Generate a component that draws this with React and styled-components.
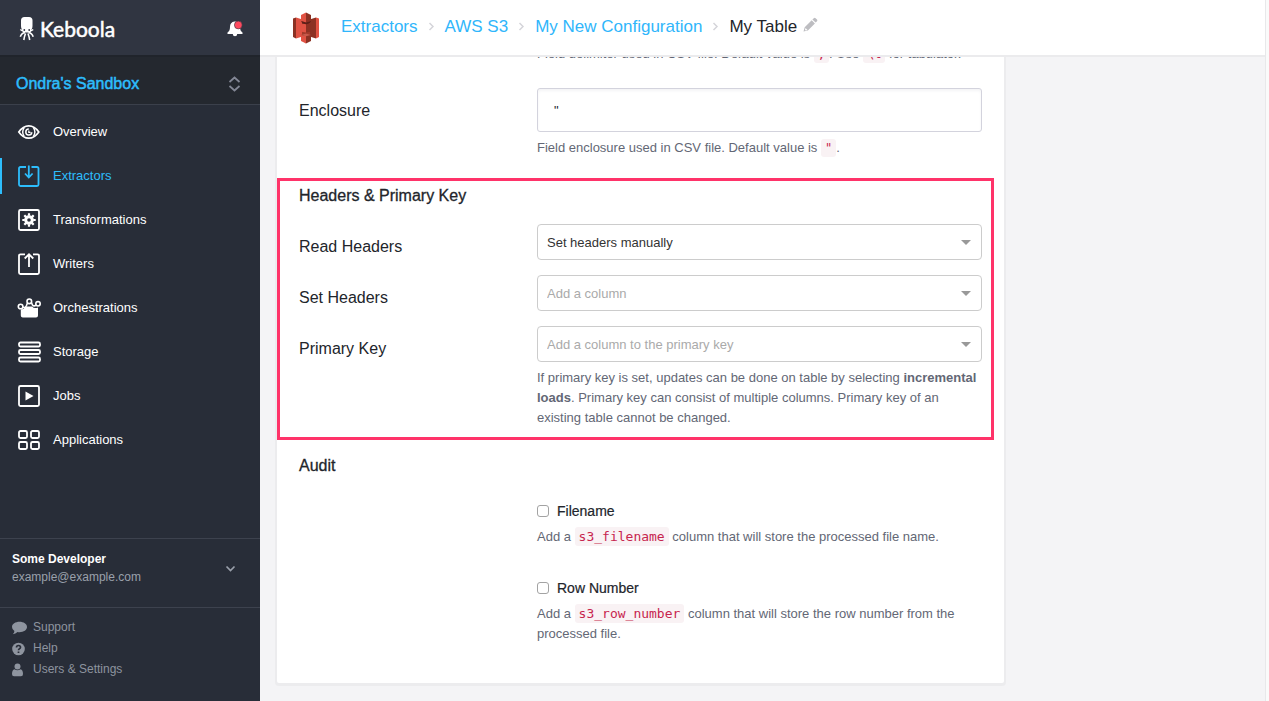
import React from "react";
import styled, { createGlobalStyle } from "styled-components";

const GlobalStyle = createGlobalStyle`
  * { box-sizing: border-box; }
  body {
    margin: 0;
    background: #fafafa;
    color: #22252b;
    font-family: "Liberation Sans", Arial, sans-serif;
    font-size: 13px;
    line-height: 20px;
  }
  a { text-decoration: none; }
  button { font: inherit; border: 0; background: none; padding: 0; cursor: pointer; }
`;

const Shell = styled.div`
  display: flex;
  min-height: 100vh;
  padding-right: 3px;
`;

/* ---------- sidebar ---------- */

const Sidebar = styled.aside`
  flex: none;
  width: 260px;
  display: flex;
  flex-direction: column;
  background: #282d38;
`;

const Brand = styled.div`
  display: flex;
  align-items: center;
  justify-content: space-between;
  height: 57px;
  padding: 2px 16px 0 18px;
  background: #303541;
  border-bottom: 2px solid #20242b;
`;

const Logo = styled.a`
  display: flex;
  align-items: center;
  gap: 5px;
  color: #fff;
  font-family: Lato, sans-serif;
  font-size: 21px;
  -webkit-text-stroke: 0.5px currentColor;
`;

const BellButton = styled.button`
  display: flex;
`;

const ProjectButton = styled.button`
  display: flex;
  align-items: center;
  justify-content: space-between;
  height: 48px;
  padding: 6px 19px 0 16px;
  background: #24282f;
  border-bottom: 1px solid #3b404b;
  color: #2dbdfc;
`;

const ProjectName = styled.span`
  font-size: 16px;
  -webkit-text-stroke: 0.5px currentColor;
`;

const Nav = styled.nav`
  display: flex;
  flex-direction: column;
  gap: 8px;
  padding-top: 9px;
`;

const NavItem = styled.a`
  display: flex;
  align-items: center;
  gap: 12px;
  height: 36px;
  padding-left: 15px;
  border-left: 2px solid ${(p) => (p.$active ? "#2dbdfc" : "transparent")};
  color: ${(p) => (p.$active ? "#2dbdfc" : "#fff")};
`;

const UserButton = styled.button`
  display: flex;
  align-items: center;
  justify-content: space-between;
  margin-top: auto;
  height: 69px;
  padding: 0 24px 10px 12px;
  border-top: 1px solid #3d424e;
  text-align: left;
  font-size: 12px;
  line-height: 18px;
  color: #9aa0ab;
`;

const UserName = styled.strong`
  display: block;
  color: #fff;
`;

const Links = styled.div`
  display: flex;
  flex-direction: column;
  height: 94px;
  padding: 9px 12px;
  border-top: 1px solid #3d424e;
  font-size: 12px;
`;

const FootLink = styled.a`
  display: flex;
  align-items: center;
  gap: 6px;
  line-height: 21px;
  color: #8e949f;
`;

/* ---------- main ---------- */

const Main = styled.main`
  flex: 1;
  min-width: 0;
  display: flex;
  flex-direction: column;
  background: #f4f4f6;
  border-right: 1px solid #e8e8ea;
`;

const Header = styled.header`
  display: flex;
  align-items: center;
  height: 57px;
  padding: 0 32px;
  background: #fff;
  border-bottom: 2px solid #ebebed;
`;

const Crumbs = styled.nav`
  display: flex;
  align-items: center;
  gap: 10px;
  margin: 0 6px 2px 21px;
  font-size: 17px;
  color: #22252b;
`;

const Crumb = styled.a`
  color: #30b6fb;
`;

const EditButton = styled(BellButton)`
  margin-bottom: 7px;
`;

const Content = styled.div`
  overflow: hidden;
  padding: 0 17px 17px;
`;

const Card = styled.form`
  max-width: 727px;
  margin-top: -16px;
  padding: 3px 0 39px;
  background: #fff;
  border-radius: 2px;
  box-shadow: 0 1px 0 2px #ececee;
`;

const Group = styled.section`
  margin-right: 10px;
  padding: 0 12px 0 22px;
`;

const Highlight = styled.section`
  margin: 20px 10px 0 0;
  padding: 5px 9px 9px 19px;
  border: 3px solid #ff3369;
`;

const SectionTitle = styled.h2`
  margin: 0;
  font-size: 16px;
  font-weight: 400;
  -webkit-text-stroke: 0.3px currentColor;
`;

const Field = styled.div`
  display: grid;
  grid-template-columns: 238px minmax(0, 1fr);
  margin-top: ${(p) => p.$gap || 0}px;
`;

const Label = styled.label`
  padding-top: 13px;
  font-size: 16px;
`;

const Control = styled.div`
  grid-column: 2;
`;

const TextInput = styled.input`
  display: block;
  width: 100%;
  height: 44px;
  padding: 0 16px;
  border: 1px solid #d3d3dd;
  border-radius: 3px;
  box-shadow: inset 0 2px 3px #f4f4f6;
  background: #fff;
  color: #22252b;
  font: inherit;
`;

const SelectWrap = styled.div`
  position: relative;
  svg {
    position: absolute;
    top: 16px;
    right: 11px;
    pointer-events: none;
  }
`;

const SelectBox = styled.select`
  appearance: none;
  display: block;
  width: 100%;
  height: 36px;
  padding: 1px 30px 0 9px;
  border: 1px solid #ccc;
  border-radius: 4px;
  background: #fff;
  color: ${(p) => (p.$empty ? "#aaa" : "#333")};
  font: inherit;
`;

const Help = styled.p`
  margin: ${(p) => (p.$flush ? 0 : 6)}px 0 0;
  color: #636775;
`;

const Code = styled.code`
  padding: 2px 4px;
  border-radius: 3px;
  background: #f9f2f4;
  color: #c7254e;
  font-family: "DejaVu Sans Mono", monospace;
  font-size: ${(p) => (p.$small ? 12 : 13)}px;
  line-height: 16px;
`;

const CheckLabel = styled.label`
  display: flex;
  align-items: center;
  gap: 7px;
  margin-bottom: 6px;
  font-size: 14px;
  -webkit-text-stroke: 0.2px currentColor;
`;

const CheckInput = styled.input`
  appearance: none;
  width: 12px;
  height: 12px;
  margin: 0 1px 0 0;
  border: 1px solid #a3a3a3;
  border-radius: 3px;
  background: #fff;
`;

/* ---------- icons ---------- */

const NavSvg = ({ children }) => (
  <svg width="24" height="24" viewBox="0 0 24 24" fill="none" stroke="currentColor" strokeWidth="2">
    {children}
  </svg>
);

const icons = {
  eye: (
    <NavSvg>
      <path d="M1.800 12Q6 5.800 11.800 5.800T21.800 12Q17.500 18.200 11.800 18.200T1.800 12Z" strokeWidth="1.700" />
      <path d="M7.200 7.500q-3 4.500 0 9M16.400 7.500q3 4.500 0 9" strokeWidth="1.400" />
      <path d="M11.800 9a3 3 0 1 0 3 3.200" strokeWidth="1.500" />
      <path d="M11.800 10.500v1.800h1.800" strokeWidth="1.200" />
    </NavSvg>
  ),
  extract: (
    <NavSvg>
      <path d="M9 3H3.500q-1.500 0-1.500 1.500v16q0 1.500 1.500 1.500h16.500q1.500 0 1.500-1.500v-16q0-1.500-1.500-1.500H14.500" strokeWidth="1.800" />
      <path d="M11.800 1.500v12M8 9.500l3.800 4 3.800-4" strokeWidth="1.800" />
    </NavSvg>
  ),
  gear: (
    <NavSvg>
      <rect x="2" y="2" width="20" height="20" rx="1.500" strokeWidth="1.800" />
      <circle cx="12" cy="12" r="3.300" strokeWidth="3" />
      <path d="M12 5.300v2.500M12 16.200v2.500M5.300 12h2.500M16.200 12h2.500M7.300 7.300l1.800 1.800M14.900 14.900l1.800 1.800M16.700 7.300l-1.800 1.800M9.100 14.900l-1.800 1.800" strokeWidth="2.200" />
    </NavSvg>
  ),
  write: (
    <NavSvg>
      <path d="M8 2.300H3.500Q2 2.300 2 3.800v16.700q0 1.500 1.500 1.500h17q1.500 0 1.500-1.500v-16.700q0-1.500-1.500-1.500H16" strokeWidth="1.800" />
      <path d="M12 15V3M7.700 6.500l4.300-4.200 4.300 4.200" strokeWidth="1.800" />
    </NavSvg>
  ),
  orchestra: (
    <NavSvg>
      <path d="M3.800 13.500q3.500-.5 5-3h6.500q1.500 2.500 5.700 1v8q0 2-2 2H5.800q-2 0-2-2Z" fill="currentColor" stroke="none" />
      <path d="M5.500 11q2.500 1.500 4-1.500l1.200-3.300M14.300 6.200l1.200 2.800q1.500 1.800 3.800 0" strokeWidth="1.600" />
      <circle cx="3.600" cy="10.500" r="2.300" fill="#282d38" strokeWidth="1.600" />
      <circle cx="12.300" cy="5.300" r="2.300" fill="#282d38" strokeWidth="1.600" />
      <circle cx="21" cy="7.800" r="2.200" fill="#282d38" strokeWidth="1.600" />
    </NavSvg>
  ),
  storage: (
    <NavSvg>
      <rect x="2" y="2.500" width="21" height="4" rx="1.500" strokeWidth="1.800" />
      <rect x="2" y="10" width="21" height="4" rx="1.500" strokeWidth="1.800" />
      <rect x="2" y="17.500" width="21" height="4" rx="1.500" strokeWidth="1.800" />
    </NavSvg>
  ),
  jobs: (
    <NavSvg>
      <rect x="2" y="2" width="20" height="20" rx="1.500" strokeWidth="1.800" />
      <path d="M8.500 7.500v9l8-4.500Z" fill="currentColor" stroke="none" />
    </NavSvg>
  ),
  apps: (
    <NavSvg>
      <rect x="2" y="3" width="8" height="7" rx="1.500" strokeWidth="1.800" />
      <rect x="14" y="3" width="8" height="7" rx="1.500" strokeWidth="1.800" />
      <rect x="2" y="14" width="8" height="7" rx="1.500" strokeWidth="1.800" />
      <rect x="14" y="14" width="8" height="7" rx="1.500" strokeWidth="1.800" />
    </NavSvg>
  ),
};

const Octopus = () => (
  <svg width="17" height="26" viewBox="0 0 17 26" fill="none" stroke="#fff">
    <path d="M3 4.500Q3 1 6.500 1h4.500Q14.500 1 14.500 4.500V10q0 2-1 3.500l-1 3h-7.500l-1-3Q3 12 3 10Z" fill="#fff" stroke="none" />
    <path d="M6.500 15Q4 15 2.300 13.500M11 15q2.500 0 4.200-1.500M7 16.500Q3.500 17 2.300 20.800M10.500 16.500q3.500.5 4.700 4.300M7.500 17.500Q6.500 20 5.800 24M10 17.500q1 2.500 1.700 6.500" strokeWidth="1.600" />
    <circle cx="6.300" cy="14" r="0.900" fill="#303541" stroke="none" />
    <circle cx="11.200" cy="14" r="0.900" fill="#303541" stroke="none" />
  </svg>
);

const Bell = () => (
  <svg width="17" height="18" viewBox="0 0 17 18">
    <path d="M7.500 1.500q-4.500.5-4.500 5.500 0 4-2.500 5.500v1.500h15v-1.500Q13 11 13 7q0-5-4.500-5.500ZM5.800 14a2.200 2.200 0 0 0 4.400 0Z" fill="#fff" />
    <circle cx="11.300" cy="5" r="3.900" fill="#ff4a5f" stroke="#303541" strokeWidth="0.600" />
  </svg>
);

const UpDown = () => (
  <svg width="13" height="16" viewBox="0 0 13 16" fill="none" stroke="#838795" strokeWidth="1.700">
    <path d="M1.500 6l5-4.500 5 4.500M1.500 10l5 4.500 5-4.500" />
  </svg>
);

const ChevronDown = () => (
  <svg width="11" height="7" viewBox="0 0 11 7" fill="none" stroke="#9aa0ab" strokeWidth="1.700">
    <path d="M1.500 1.500l4 4 4-4" />
  </svg>
);

const Separator = () => (
  <svg width="7" height="9" viewBox="0 0 7 9" fill="none" stroke="#d5d5da" strokeWidth="1.500">
    <path d="M1.500 1l3.500 3.500L1.500 8" />
  </svg>
);

const Caret = () => (
  <svg width="10" height="5" viewBox="0 0 10 5">
    <path d="M0 0h10L5 5Z" fill="#999" />
  </svg>
);

const Pencil = () => (
  <svg width="15" height="15" viewBox="0 0 15 15" fill="#bdbdc1">
    <path d="M10.800 1.200q.9-.9 1.800 0l1.400 1.400q.8.800 0 1.600L12.600 5.600 9.400 2.600ZM8.700 3.300l3.200 3.200-7 7L.5 14.500l1.200-4.200ZM2.500 11l-.5 2 .8.600 1.700-.5Z" fillRule="evenodd" />
  </svg>
);

const S3Logo = () => (
  <svg width="28" height="32" viewBox="0 0 28 32">
    <path d="M4 5.500l6.500 2v17L4 26.500Z" fill="#e05243" />
    <path d="M1 6.500l3-1v21l-3-1.500Z" fill="#8c3123" />
    <path d="M24 5.500l-6.500 2v17l6.500 2Z" fill="#8c3123" />
    <path d="M24 5.500l3 1v18.500l-3 1.500Z" fill="#e05243" />
    <path d="M10 9h8v14h-8Z" fill="#a33a2b" />
    <path d="M14 .5l5 2.500v6l-5 1.500Z" fill="#8c3123" />
    <path d="M14 .5L9 3v6l5 1.500Z" fill="#e05243" />
    <path d="M14 11.500l4.500.7v7.600l-4.500.7Z" fill="#8c3123" />
    <path d="M14 11.500l-4.500.7v7.600l4.500.7Z" fill="#e05243" />
    <path d="M9 23l5-1.500L19 23v6l-5 2.500Z" fill="#8c3123" />
    <path d="M14 24L9 23v6l5 2.500Z" fill="#e05243" />
    <path d="M9 9l5 1.500L19 9l-1.500 2.500-3.500.8-3.500-.8Z" fill="#5e1f18" />
    <path d="M9 23l5 1.200 5-1.200-5-1.500Z" fill="#c75a4c" />
  </svg>
);

const SpeechIcon = () => (
  <svg width="15" height="14" viewBox="0 0 15 14" fill="currentColor">
    <path d="M7.500.8C11.600.8 15 3 15 6s-3.400 5.200-7.500 5.200q-1 0-2-.2Q3.500 13 .8 13.300q1.500-1.400 1.600-3.200Q0 8.500 0 6C0 3 3.400.8 7.500.8Z" />
  </svg>
);

const HelpIcon = () => (
  <svg width="15" height="14" viewBox="0 0 15 14">
    <circle cx="6.500" cy="7" r="6.300" fill="currentColor" />
    <path d="M4.500 5.500q0-2 2-2t2 1.800q0 1-1 1.500t-1 1.500M6.500 9.400v1.600" fill="none" stroke="#282d38" strokeWidth="1.700" />
  </svg>
);

const PersonIcon = () => (
  <svg width="15" height="14" viewBox="0 0 15 14" fill="currentColor">
    <circle cx="5.500" cy="3.500" r="3" />
    <path d="M2.500 6.200q3 2 6 0Q11 7 11 11q0 2.300-2 2.300H2Q0 13.300 0 11 0 7 2.500 6.200Z" />
  </svg>
);

/* ---------- page ---------- */

const navItems = [
  ["Overview", "eye"],
  ["Extractors", "extract"],
  ["Transformations", "gear"],
  ["Writers", "write"],
  ["Orchestrations", "orchestra"],
  ["Storage", "storage"],
  ["Jobs", "jobs"],
  ["Applications", "apps"],
];

const SelectField = ({ id, label, value, empty, gap, children }) => (
  <Field $gap={gap}>
    <Label htmlFor={id}>{label}</Label>
    <Control>
      <SelectWrap>
        <SelectBox id={id} $empty={empty}>
          <option>{value}</option>
        </SelectBox>
        <Caret />
      </SelectWrap>
      {children}
    </Control>
  </Field>
);

const CheckField = ({ id, label, gap, children }) => (
  <Field $gap={gap}>
    <Control>
      <CheckLabel htmlFor={id}>
        <CheckInput id={id} type="checkbox" />
        {label}
      </CheckLabel>
      <Help $flush>{children}</Help>
    </Control>
  </Field>
);

export default function App() {
  return (
    <>
      <GlobalStyle />
      <Shell>
        <Sidebar>
          <Brand>
            <Logo href="#">
              <Octopus />
              Keboola
            </Logo>
            <BellButton type="button" aria-label="Notifications">
              <Bell />
            </BellButton>
          </Brand>
          <ProjectButton type="button">
            <ProjectName>Ondra's Sandbox</ProjectName>
            <UpDown />
          </ProjectButton>
          <Nav>
            {navItems.map(([name, icon]) => (
              <NavItem key={name} href="#" $active={name === "Extractors"}>
                {icons[icon]}
                {name}
              </NavItem>
            ))}
          </Nav>
          <UserButton type="button">
            <span>
              <UserName>Some Developer</UserName>
              example@example.com
            </span>
            <ChevronDown />
          </UserButton>
          <Links>
            <FootLink href="#"><SpeechIcon />Support</FootLink>
            <FootLink href="#"><HelpIcon />Help</FootLink>
            <FootLink href="#"><PersonIcon />Users &amp; Settings</FootLink>
          </Links>
        </Sidebar>
        <Main>
          <Header>
            <S3Logo />
            <Crumbs>
              <Crumb href="#">Extractors</Crumb>
              <Separator />
              <Crumb href="#">AWS S3</Crumb>
              <Separator />
              <Crumb href="#">My New Configuration</Crumb>
              <Separator />
              <span>My Table</span>
            </Crumbs>
            <EditButton type="button" aria-label="Edit name">
              <Pencil />
            </EditButton>
          </Header>
          <Content>
            <Card>
              <Group>
                <Field>
                  <Control>
                    <Help $flush>
                      Field delimiter used in CSV file. Default value is <Code $small>,</Code>. Use <Code $small>\t</Code> for tabulator.
                    </Help>
                  </Control>
                </Field>
                <Field $gap={24}>
                  <Label htmlFor="enclosure">Enclosure</Label>
                  <Control>
                    <TextInput id="enclosure" type="text" defaultValue={'"'} />
                    <Help>
                      Field enclosure used in CSV file. Default value is <Code $small>"</Code>.
                    </Help>
                  </Control>
                </Field>
              </Group>
              <Highlight>
                <SectionTitle>Headers &amp; Primary Key</SectionTitle>
                <SelectField id="read" label="Read Headers" value="Set headers manually" gap={18} />
                <SelectField id="set" label="Set Headers" value="Add a column" empty gap={15} />
                <SelectField id="pk" label="Primary Key" value="Add a column to the primary key" empty gap={15}>
                  <Help>
                    If primary key is set, updates can be done on table by selecting <strong>incremental loads</strong>.
                    Primary key can consist of multiple columns. Primary key of an existing table cannot be changed.
                  </Help>
                </SelectField>
              </Highlight>
              <Group>
                <Field $gap={16}>
                  <SectionTitle>Audit</SectionTitle>
                </Field>
                <CheckField id="filename" label="Filename" gap={25}>
                  Add a <Code>s3_filename</Code> column that will store the processed file name.
                </CheckField>
                <CheckField id="rownumber" label="Row Number" gap={31}>
                  Add a <Code>s3_row_number</Code> column that will store the row number from the processed file.
                </CheckField>
              </Group>
            </Card>
          </Content>
        </Main>
      </Shell>
    </>
  );
}
